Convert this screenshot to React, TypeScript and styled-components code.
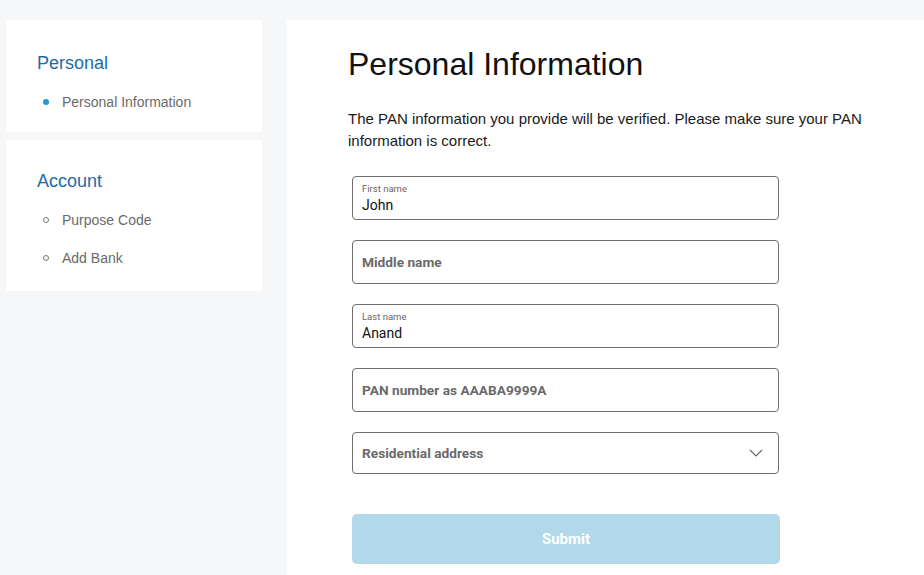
import React from "react";
import styled, { createGlobalStyle } from "styled-components";

const Global = createGlobalStyle`
  html, body { margin: 0; padding: 0; background: #f6f7f9; }
  body { font-family: "Liberation Sans", Arial, sans-serif; }
  * { box-sizing: border-box; }
`;

const Page = styled.div`
  display: flex;
  align-items: flex-start;
  padding-top: 20px;
  min-height: 575px;
`;

const Sidebar = styled.aside`
  width: 256px;
  margin-left: 6px;
  display: flex;
  flex-direction: column;
  gap: 8px;
`;

const Card = styled.div<{ $h: number; $pt: number }>`
  background: #fff;
  height: ${(p) => p.$h}px;
  padding: ${(p) => p.$pt}px 0 0 31px;
`;

const SectionTitle = styled.div`
  color: #1f6aa8;
  font-size: 18px;
  line-height: 22px;
  margin-bottom: 17px;
`;

const NavList = styled.ul`
  list-style: none;
  margin: 0;
  padding: 0;
  display: flex;
  flex-direction: column;
  gap: 16px;
`;

const NavItem = styled.li<{ $active?: boolean }>`
  display: flex;
  align-items: center;
  font-size: 14px;
  line-height: 22px;
  color: #6b6b6b;
  &::before {
    content: "";
    width: 6px;
    height: 6px;
    border-radius: 50%;
    margin: 0 13px 0 6px;
    box-sizing: border-box;
    ${(p) =>
      p.$active
        ? "background: #1b9ad8;"
        : "border: 1px solid #777; background: transparent;"}
  }
`;

const Main = styled.main`
  flex: 1;
  margin-left: 25px;
  background: #fff;
  min-height: 555px;
  padding: 24px 40px 0 61px;
`;

const Title = styled.h1`
  margin: 0;
  font-weight: 400;
  font-size: 32px;
  line-height: 40px;
  color: #111;
`;

const Intro = styled.p`
  margin: 24px 0 24px;
  font-size: 15px;
  line-height: 22px;
  color: #1a1a1a;
  max-width: 530px;
`;

const Form = styled.form`
  margin-left: 4px;
  width: 427px;
  display: flex;
  flex-direction: column;
  gap: 20px;
`;

const Field = styled.div<{ $h?: number }>`
  position: relative;
  height: ${(p) => p.$h ?? 44}px;
  border: 1px solid #6e6e6e;
  border-radius: 4px;
  padding: 0 9px;
  display: flex;
  flex-direction: column;
  justify-content: center;
  font-family: Roboto, "Liberation Sans", sans-serif;
`;

const FloatLabel = styled.span`
  font-size: 9.5px;
  line-height: 12px;
  color: #666;
  margin-top: 1px;
  margin-bottom: 1px;
`;

const Value = styled.span`
  font-size: 14px;
  line-height: 17px;
  color: #111;
  margin-top: 1px;
`;

const Placeholder = styled.span`
  font-size: 13.7px;
  font-weight: 700;
  color: #6a6a6a;
  margin-bottom: 1px;
`;

const Chevron = styled.svg`
  position: absolute;
  right: 15px;
  top: 50%;
  transform: translateY(-50%);
`;

const Submit = styled.button`
  margin-top: 20px;
  height: 50px;
  width: 428px;
  border: none;
  border-radius: 5px;
  background: #b1d9ea;
  color: #fff;
  font-family: Roboto, "Liberation Sans", sans-serif;
  font-weight: 700;
  font-size: 15px;
`;

export default function App() {
  return (
    <>
      <Global />
      <Page>
        <Sidebar>
          <Card $h={112} $pt={32}>
            <SectionTitle>Personal</SectionTitle>
            <NavList>
              <NavItem $active>Personal Information</NavItem>
            </NavList>
          </Card>
          <Card $h={151} $pt={30}>
            <SectionTitle>Account</SectionTitle>
            <NavList>
              <NavItem>Purpose Code</NavItem>
              <NavItem>Add Bank</NavItem>
            </NavList>
          </Card>
        </Sidebar>
        <Main>
          <Title>Personal Information</Title>
          <Intro>
            The PAN information you provide will be verified. Please make sure your PAN information is correct.
          </Intro>
          <Form>
            <Field>
              <FloatLabel>First name</FloatLabel>
              <Value>John</Value>
            </Field>
            <Field>
              <Placeholder>Middle name</Placeholder>
            </Field>
            <Field>
              <FloatLabel>Last name</FloatLabel>
              <Value>Anand</Value>
            </Field>
            <Field>
              <Placeholder>PAN number as AAABA9999A</Placeholder>
            </Field>
            <Field $h={42}>
              <Placeholder>Residential address</Placeholder>
              <Chevron width="14" height="8" viewBox="0 0 14 8">
                <path d="M1 1l6 6 6-6" fill="none" stroke="#666" strokeWidth="1.2" />
              </Chevron>
            </Field>
            <Submit type="button">Submit</Submit>
          </Form>
        </Main>
      </Page>
    </>
  );
}
